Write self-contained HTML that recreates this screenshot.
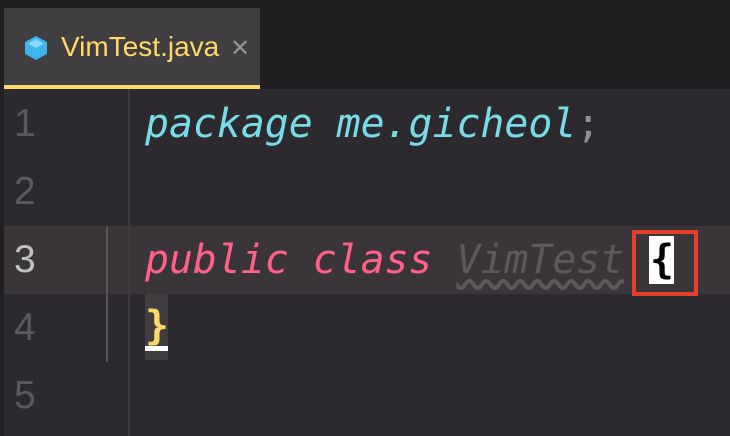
<!DOCTYPE html><html><head><style>
body{margin:0;width:730px;height:436px;background:#2c2a2e;overflow:hidden;position:relative;font-family:"DejaVu Sans Mono","Liberation Mono",monospace}
.tabbar{position:absolute;left:0;top:0;width:730px;height:89px;background:#221f22}
.tab{position:absolute;left:4px;top:8px;width:256px;height:78px;background:#403e41}
.tab .ul{position:absolute;left:0;bottom:-3px;width:256px;height:4px;background:#ffd866}
.tab .name{position:absolute;left:57px;top:23px;font:28px "Liberation Sans",sans-serif;color:#ffd866}
.tab .x{position:absolute;left:226px;top:26px;font:24px "Liberation Sans",sans-serif;color:#939293}
.ln{position:absolute;left:14px;width:40px;font:39px "Liberation Sans",sans-serif;color:#5b595c;line-height:68px}
.code{position:absolute;left:145px;font-size:39.8px;font-style:italic;line-height:68px;white-space:pre}
</style></head><body>
<div class="tabbar"><div class="tab">
<svg style="position:absolute;left:20px;top:27px" width="24" height="26" viewBox="0 0 24 26"><polygon points="12,1 23,7 23,19 12,25 1,19 1,7" fill="#3fb4ef"/><polygon points="12,4 20,8.5 12,13 4,8.5" fill="#8fd8ff"/></svg>
<div class="name">VimTest.java</div><div class="x">✕</div><div class="ul"></div></div></div>
<div style="position:absolute;left:0;top:89px;width:4px;height:347px;background:#221f22"></div>
<div style="position:absolute;left:4px;top:226px;width:726px;height:68px;background:#3a3539"></div>
<div style="position:absolute;left:128px;top:89px;width:2px;height:347px;background:#3d3b3e"></div>
<div style="position:absolute;left:106px;top:226px;width:2px;height:136px;background:#555356"></div>
<div class="ln" style="top:90px">1</div>
<div class="ln" style="top:158px">2</div>
<div class="ln" style="top:226px;color:#c1c0c0">3</div>
<div class="ln" style="top:294px">4</div>
<div class="ln" style="top:362px">5</div>
<div class="code" style="top:90px;color:#78dce8">package me.gicheol<span style="color:#939293;font-style:normal">;</span></div>
<div class="code" style="top:226px;color:#ff6188">public class <span style="color:#5b595c;text-decoration:underline wavy #5b595c;text-underline-offset:6px">VimTest</span></div>
<div style="position:absolute;left:145px;top:294px;width:23px;height:66px;background:#403e41"></div>
<div style="position:absolute;left:145px;top:346px;width:23px;height:5px;background:#fff"></div>
<div class="code" style="top:292px;color:#ffd866;font-style:normal;font-weight:bold">}</div>
<div style="position:absolute;left:649px;top:236px;width:25px;height:48px;background:#fff"></div>
<div class="code" style="top:226px;left:650px;color:#000;font-style:normal;font-weight:bold">{</div>
<div style="position:absolute;left:632px;top:230px;width:58px;height:58px;border:4px solid #e53e2a"></div>
</body></html>
